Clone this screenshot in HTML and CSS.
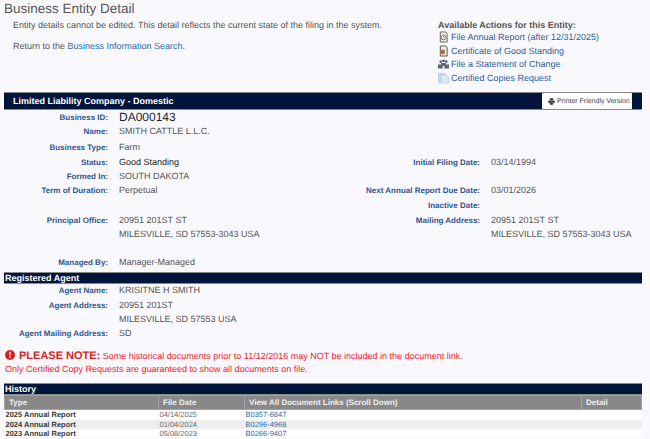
FILE: index.html
```html
<!DOCTYPE html>
<html lang="en">
<head>
<meta charset="utf-8">
<title>Business Entity Detail</title>
<link rel="stylesheet" href="styles.css">
</head>
<body>
<main class="page">
  <h1 class="title">Business Entity Detail</h1>
  <section class="intro">
    <div class="intro-text">
      <p class="intro-line">Entity details cannot be edited. This detail reflects the current state of the filing in the system.</p>
      <p class="intro-line return">Return to the <a href="#">Business Information Search</a>.</p>
    </div>
    <div class="actions">
      <div class="actions-title">Available Actions for this Entity:</div>
      <a class="action" href="#"><svg class="icon" viewBox="0 0 12 12"><path d="M2.500 .5h6l1.500 2v9h-7.500z" fill="#f4efe6" stroke="#6b5a48"/><circle cx="6" cy="6.500" r="2.600" fill="#fff" stroke="#9a5a2c"/><path d="M6 5v1.600h1.200" fill="none" stroke="#6b5a48" stroke-width=".7"/></svg>File Annual Report (after 12/31/2025)</a>
      <a class="action" href="#"><svg class="icon" viewBox="0 0 12 12"><path d="M2.500 .5h6l1.500 2v9h-7.500z" fill="#efe9dc" stroke="#5d5042"/><circle cx="5" cy="7" r="2.700" fill="#a8703f"/></svg>Certificate of Good Standing</a>
      <a class="action" href="#"><svg class="icon" viewBox="0 0 12 12"><circle cx="3" cy="3.500" r="1.500" fill="#4f6f95"/><circle cx="9" cy="3.500" r="1.500" fill="#4f6f95"/><circle cx="6" cy="2.500" r="1.500" fill="#5a5a5a"/><path d="M0 11V6.500h3.500V5h5v1.500H12V11z" fill="#5a6675"/><path d="M5 8h2v3H5z" fill="#fff"/></svg>File a Statement of Change</a>
      <a class="action" href="#"><svg class="icon" viewBox="0 0 12 12"><path d="M.5 1h6l2 2v8h-8z" fill="#c9dcef" stroke="#a9c3dd" stroke-width=".7"/><path d="M3 2.500h6l2.500 2.500v6.500H3z" fill="#dbe8f5" stroke="#a9c3dd" stroke-width=".7"/></svg>Certified Copies Request</a>
    </div>
  </section>

  <header class="bar bar-main">
    <span>Limited Liability Company - Domestic</span>
    <button class="print" type="button"><svg class="print-icon" viewBox="0 0 10 10"><path d="M2.500 .5h5v2.500h-5zM.5 3.500h9v4h-2V6h-5v1.500h-2zM3 6.500h4v3H3z" fill="#333"/></svg>Printer Friendly Version</button>
  </header>

  <dl class="fields main-fields">
    <dt class="lbl">Business ID:</dt><dd class="val val-id">DA000143</dd>
    <dt class="lbl col-1">Name:</dt><dd class="val">SMITH CATTLE L.L.C.</dd>
    <dt class="lbl col-1">Business Type:</dt><dd class="val">Farm</dd>
    <dt class="lbl col-1">Status:</dt><dd class="val val-dark">Good Standing</dd><dt class="lbl">Initial Filing Date:</dt><dd class="val">03/14/1994</dd>
    <dt class="lbl col-1">Formed In:</dt><dd class="val">SOUTH DAKOTA</dd>
    <dt class="lbl col-1">Term of Duration:</dt><dd class="val">Perpetual</dd><dt class="lbl">Next Annual Report Due Date:</dt><dd class="val">03/01/2026</dd>
    <dt class="lbl col-3">Inactive Date:</dt><dd class="val"></dd>
    <dt class="lbl col-1">Principal Office:</dt><dd class="val">20951 201ST ST</dd><dt class="lbl">Mailing Address:</dt><dd class="val">20951 201ST ST</dd>
    <dd class="val col-2">MILESVILLE, SD 57553-3043 USA</dd><dd class="val col-4">MILESVILLE, SD 57553-3043 USA</dd>
    <dt class="lbl col-1 row-managed">Managed By:</dt><dd class="val row-managed">Manager-Managed</dd>
  </dl>

  <h2 class="bar bar-sub">Registered Agent</h2>
  <dl class="fields agent">
    <dt class="lbl">Agent Name:</dt><dd class="val">KRISITNE H SMITH</dd>
    <dt class="lbl col-1">Agent Address:</dt><dd class="val">20951 201ST</dd>
    <dd class="val col-2">MILESVILLE, SD 57553 USA</dd>
    <dt class="lbl col-1">Agent Mailing Address:</dt><dd class="val">SD</dd>
  </dl>

  <section class="note">
    <p class="note-line"><svg class="note-icon" viewBox="0 0 10 10"><circle cx="5" cy="5" r="5" fill="#d81f1f"/><path d="M4.200 1.800h1.600l-.3 3.900h-1zM4.200 6.500h1.600v1.600H4.200z" fill="#fff"/></svg><strong class="note-strong">PLEASE NOTE:</strong> Some historical documents prior to 11/12/2016 may NOT be included in the document link.</p>
    <p class="note-line">Only Certified Copy Requests are guaranteed to show all documents on file.</p>
  </section>

  <h2 class="bar bar-sub bar-hist">History</h2>
  <table class="history">
    <thead>
      <tr><th class="c1">Type</th><th class="c2">File Date</th><th class="c3">View All Document Links (Scroll Down)</th><th class="c4">Detail</th></tr>
    </thead>
    <tbody>
      <tr class="first"><td class="kind">2025 Annual Report</td><td>04/14/2025</td><td><a href="#">B0357-6847</a></td><td></td></tr>
      <tr class="alt"><td class="kind">2024 Annual Report</td><td>01/04/2024</td><td><a href="#">B0296-4968</a></td><td></td></tr>
      <tr><td class="kind">2023 Annual Report</td><td>05/08/2023</td><td><a href="#">B0266-9407</a></td><td></td></tr>
    </tbody>
  </table>
</main>
</body>
</html>
```
FILE: styles.css
```css
* { box-sizing: border-box; }
html, body { margin: 0; height: 100%; overflow: hidden; }
body {
  background: #f9f9fd;
  color: #555;
  font-family: "Liberation Sans", Arial, sans-serif;
  font-size: 9px;
  line-height: 14px;
  text-rendering: geometricPrecision;
}
a { color: #2c6aa8; text-decoration: none; }
.page { width: 638px; margin-left: 4px; }
.title {
  margin: 0;
  font-size: 13.500px;
  font-weight: 400;
  line-height: 18px;
  color: #555;
}
.intro { display: flex; justify-content: space-between; height: 74px; }
.intro-text { padding-left: 9px; }
.intro-line { margin: 0; line-height: 14px; }
.return { margin-top: 7px; }
.actions { width: 204px; padding-top: 1px; }
.actions-title { font-weight: 700; line-height: 12px; margin-bottom: -.75px; }
.action { display: flex; align-items: center; gap: 2px; height: 13.500px; color: #2f5c98; white-space: nowrap; }
.icon { width: 11px; height: 12px; flex: none; }
.bar {
  margin: 0;
  background: #00143c;
  color: #fff;
  font-weight: 700;
  font-size: 9px;
  border: 1px solid #8a8a8a;
  border-width: 1px 0;
}
.bar-main {
  display: flex;
  justify-content: space-between;
  align-items: center;
  height: 18px;
  padding: 0 10px 0 9px;
}
.print {
  display: flex;
  align-items: center;
  gap: 2px;
  height: 16px;
  width: 90px;
  padding: 0 0 0 6px;
  border: 0;
  border-radius: 1px;
  background: #fff;
  color: #444;
  font: 400 7px "Liberation Sans", Arial, sans-serif;
  text-rendering: geometricPrecision;
  white-space: nowrap;
}
.print-icon { width: 7px; height: 7px; flex: none; }
.fields {
  display: grid;
  grid-template-columns: 104px 252px 120px 162px;
  margin: 0;
}
.main-fields {
  height: 162px;
  grid-template-rows: 14px 16px 15px 14px 14px 15px 15px 14px 28px 14px;
  align-items: start;
}
.lbl { font-weight: 700; color: #2f5590; text-align: right; font-size: 8px; white-space: nowrap; padding-top: 1px; }
.val { margin: 0 0 0 11px; color: #555; white-space: nowrap; }
.val-id { font-size: 12px; color: #223; }
.val-dark { color: #222; }
.col-1 { grid-column: 1; }
.col-2 { grid-column: 2; }
.col-3 { grid-column: 3; }
.col-4 { grid-column: 4; }
.row-managed { grid-row: 10; }
.bar-sub { height: 12px; line-height: 10px; padding-left: 1px; }
.agent {
  height: 65.500px;
  grid-template-rows: 15px 14px 14px 14px;
  line-height: 12px;
  align-items: start;
}
.note { color: #f0202c; height: 33.500px; padding-left: 1px; }
.note-line { margin: 0; line-height: 13px; height: 13px; white-space: nowrap; }
.note-icon { width: 10px; height: 10px; margin-right: 4px; vertical-align: -1px; }
.note-strong { font-size: 11px; font-weight: 700; color: #d81f1f; }
.history { width: 638px; border-collapse: collapse; table-layout: fixed; background: #fff; font-size: 7.500px; line-height: 9px; color: #666; }
.history th {
  background: #888;
  color: #eee;
  height: 14px;
  padding: 0 3px 0 4px;
  text-align: left;
  font-size: 8px;
  font-weight: 700;
  border: 1px solid #a2a2a2;
}
.c1 { width: 154px; }
.c2 { width: 86px; }
.c3 { width: 337px; }
.history td { padding: 0 0 0 1px; height: 9px; white-space: nowrap; }
.first td { height: 10px; }
.kind { font-weight: 700; color: #3a3a3a; }
.alt { background: #eee; }
```
